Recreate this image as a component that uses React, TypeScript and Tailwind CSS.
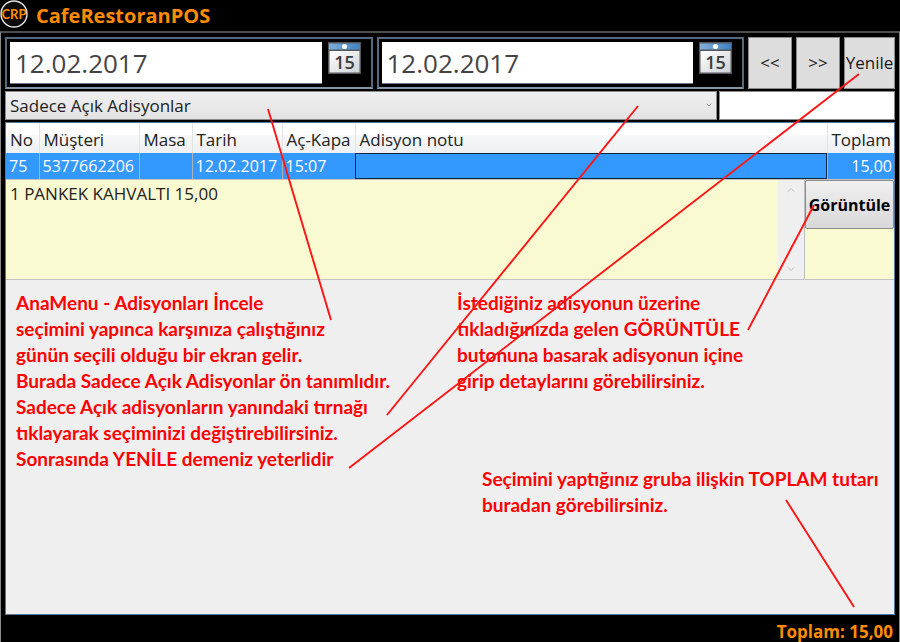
import React from 'react';
import { ChevronDown, ChevronUp } from 'lucide-react';

interface Ticket {
  no: number;
  customer: string;
  table: string;
  date: string;
  time: string;
  note: string;
  total: string;
}

const ticket: Ticket = {
  no: 75,
  customer: '5377662206',
  table: '',
  date: '12.02.2017',
  time: '15:07',
  note: '',
  total: '15,00',
};

const columns = [
  { label: 'No', width: 'w-[33px]' },
  { label: 'Müşteri', width: 'w-[100px]' },
  { label: 'Masa', width: 'w-[53px]' },
  { label: 'Tarih', width: 'w-[90px]' },
  { label: 'Aç-Kapa', width: 'w-[73px]' },
  { label: 'Adisyon notu', width: '' },
  { label: 'Toplam', width: 'w-[67px]' },
];

const notes = [
  {
    place: 'left-4 top-[290px]',
    lines: [
      'AnaMenu - Adisyonları İncele',
      'seçimini yapınca karşınıza çalıştığınız',
      'günün seçili olduğu bir ekran gelir.',
      'Burada Sadece Açık Adisyonlar ön tanımlıdır.',
      'Sadece Açık adisyonların yanındaki tırnağı',
      'tıklayarak seçiminizi değiştirebilirsiniz.',
      'Sonrasında YENİLE demeniz yeterlidir',
    ],
  },
  {
    place: 'left-[457px] top-[290px]',
    lines: [
      'İstediğiniz adisyonun üzerine',
      'tıkladığınızda gelen GÖRÜNTÜLE',
      'butonuna basarak adisyonun içine',
      'girip detaylarını görebilirsiniz.',
    ],
  },
  {
    place: 'left-[482px] top-[466px]',
    lines: ['Seçimini yaptığınız gruba ilişkin TOPLAM tutarı', 'buradan görebilirsiniz.'],
  },
];

const Logo = () => (
  <svg width="28" height="28" viewBox="0 0 28 28" aria-hidden="true">
    <circle cx="14" cy="14" r="13" fill="#0a0a0a" stroke="#e5e5e5" strokeWidth="1.4" />
    <text
      x="14"
      y="19"
      textAnchor="middle"
      fontSize="13"
      fontWeight="bold"
      fontFamily="Lato, sans-serif"
      fill="#ff8c00"
    >
      CRP
    </text>
  </svg>
);

const CalendarIcon = () => (
  <svg width="33" height="32" viewBox="0 0 33 32" aria-hidden="true">
    <defs>
      <linearGradient id="calTop" x1="0" x2="1">
        <stop offset="0" stopColor="#7fb0dc" />
        <stop offset="1" stopColor="#3f83c0" />
      </linearGradient>
      <linearGradient id="calPage" x1="0" y1="0" x2="1" y2="1">
        <stop offset="0" stopColor="#ffffff" />
        <stop offset="1" stopColor="#cfd2d6" />
      </linearGradient>
    </defs>
    <rect width="33" height="32" fill="#55575a" />
    <rect x="1" y="1.5" width="31" height="6" fill="url(#calTop)" />
    <rect x="1.5" y="9" width="30" height="21.5" fill="url(#calPage)" />
    <circle cx="16.5" cy="4.5" r="2.6" fill="#fff" />
    <text x="16.5" y="27" textAnchor="middle" fontSize="18" fontWeight="600" fontFamily="'Open Sans', sans-serif" fill="#3c3c3c">
      15
    </text>
  </svg>
);

const DatePicker: React.FC<{ label: string }> = ({ label }) => (
  <div className="flex flex-1 min-w-0 items-start border-2 border-[#56697b] border-b-[#8795a3] p-[3px]">
    <input
      type="text"
      aria-label={label}
      defaultValue="12.02.2017"
      className="h-[42px] min-w-0 flex-1 border-b border-gray-500 bg-white px-[5px] text-[26px] text-[#444]"
    />
    <button type="button" aria-label="Takvim" className="ml-1.5 mr-[7px]">
      <CalendarIcon />
    </button>
  </div>
);

const toolButton = 'border border-[#8a8a8a] bg-[#dddddd] text-[17px] text-[#1a1a1a]';

const App: React.FC = () => {
  return (
    <div className="relative flex min-h-screen flex-col overflow-hidden bg-black font-['Open_Sans','Noto_Sans',sans-serif] text-[17px] text-[#222]">
      <header className="flex h-[31px] items-center gap-2 pb-[3px]">
        <Logo />
        <h1 className="mt-1 text-xl font-bold leading-6 text-[#ff8c00]">CafeRestoranPOS</h1>
      </header>

      <main className="flex flex-1 flex-col gap-0.5 border-x border-t-2 border-x-[#8a8a8a] border-t-[#4d4d4d] px-1 pt-1">
        {/* Date range */}
        <div className="flex h-[52px] gap-1">
          <DatePicker label="Başlangıç tarihi" />
          <DatePicker label="Bitiş tarihi" />
          <button type="button" className={`w-11 ${toolButton}`}>&lt;&lt;</button>
          <button type="button" className={`w-11 ${toolButton}`}>&gt;&gt;</button>
          <button type="button" className={`w-[51px] ${toolButton}`}>Yenile</button>
        </div>

        {/* Filter */}
        <div className="flex h-[29px] gap-0.5">
          <div className="relative flex-1">
            <select
              aria-label="Adisyon filtresi"
              className="size-full appearance-none border border-[#8c8c8c] bg-linear-to-b from-[#f0f0f0] to-[#e2e2e2] px-1 text-[17px]"
            >
              <option>Sadece Açık Adisyonlar</option>
            </select>
            <ChevronDown size={8} className="pointer-events-none absolute right-1 top-2.5 text-[#666]" />
          </div>
          <input type="text" aria-label="Ara" className="w-44 border border-[#8c8c8c] bg-white px-1" />
        </div>

        {/* Tickets */}
        <div className="flex-1 border border-[#54789b] bg-[#efefef]">
          <table className="w-full table-fixed border-collapse">
            <thead>
              <tr className="h-[30px] bg-linear-to-b from-white from-40% via-[#f7f8f9] via-40% to-[#eeeff1]">
                {columns.map((col) => (
                  <th
                    key={col.label}
                    className={`whitespace-nowrap border-r border-[#e2e3e5] p-0 pl-1 pt-1 text-left font-normal leading-6 last:border-r-0 ${col.width}`}
                  >
                    {col.label}
                  </th>
                ))}
              </tr>
            </thead>
            <tbody>
              <tr className="h-[26px] bg-[#3399ff] text-base leading-6 text-white *:border-r *:border-[#a9b4bf] *:p-0 *:pl-[3px]">
                <td>{ticket.no}</td>
                <td>{ticket.customer}</td>
                <td>{ticket.table}</td>
                <td>{ticket.date}</td>
                <td>{ticket.time}</td>
                <td className="outline -outline-offset-1 outline-[#0d2440]">{ticket.note}</td>
                <td className="border-r-0! pr-0.5! text-right">{ticket.total}</td>
              </tr>
              <tr>
                <td colSpan={7} className="p-0">
                  <div className="flex h-[101px] items-start border-y border-[#c3c3c3] bg-[#fafad2]">
                    <p className="flex-1 px-1 pt-0.5 leading-6">1 PANKEK KAHVALTI 15,00</p>
                    <div className="flex h-full w-[27px] flex-col items-center justify-between border-r border-[#bcbcbc] bg-[#efefef] py-1 text-[#c0c0c0]">
                      <ChevronUp size={12} />
                      <ChevronDown size={12} />
                    </div>
                    <button
                      type="button"
                      className="h-[49px] w-[89px] rounded-xs border border-[#8c8c8c] bg-linear-to-b from-[#f0f0f0] to-[#d8d8d8] text-base font-bold text-black"
                    >
                      Görüntüle
                    </button>
                  </div>
                </td>
              </tr>
            </tbody>
          </table>
        </div>

        <footer className="flex h-[25px] items-center justify-end pr-0.5 pt-1 font-bold text-[#ff8c00]">
          Toplam: {ticket.total}
        </footer>
      </main>

      {/* Help notes over the screen */}
      <div className="pointer-events-none absolute inset-0 text-[#ff0000]">
        {notes.map((note) => (
          <p key={note.place} className={`absolute whitespace-nowrap font-['Lato',sans-serif] text-[19px] font-bold leading-[26px] ${note.place}`}>
            {note.lines.map((line) => (
              <span key={line} className="block">{line}</span>
            ))}
          </p>
        ))}
        <svg width="900" height="642" viewBox="0 0 900 642" className="absolute left-0 top-0" stroke="#ff1414" strokeWidth="1.9">
          <path d="M268 109 331 320" />
          <path d="M638 106 387 415" />
          <path d="M859 74 349 468" />
          <path d="M814 205 748 330" />
          <path d="M786 500 854 607" />
        </svg>
      </div>
    </div>
  );
};

export default App;
